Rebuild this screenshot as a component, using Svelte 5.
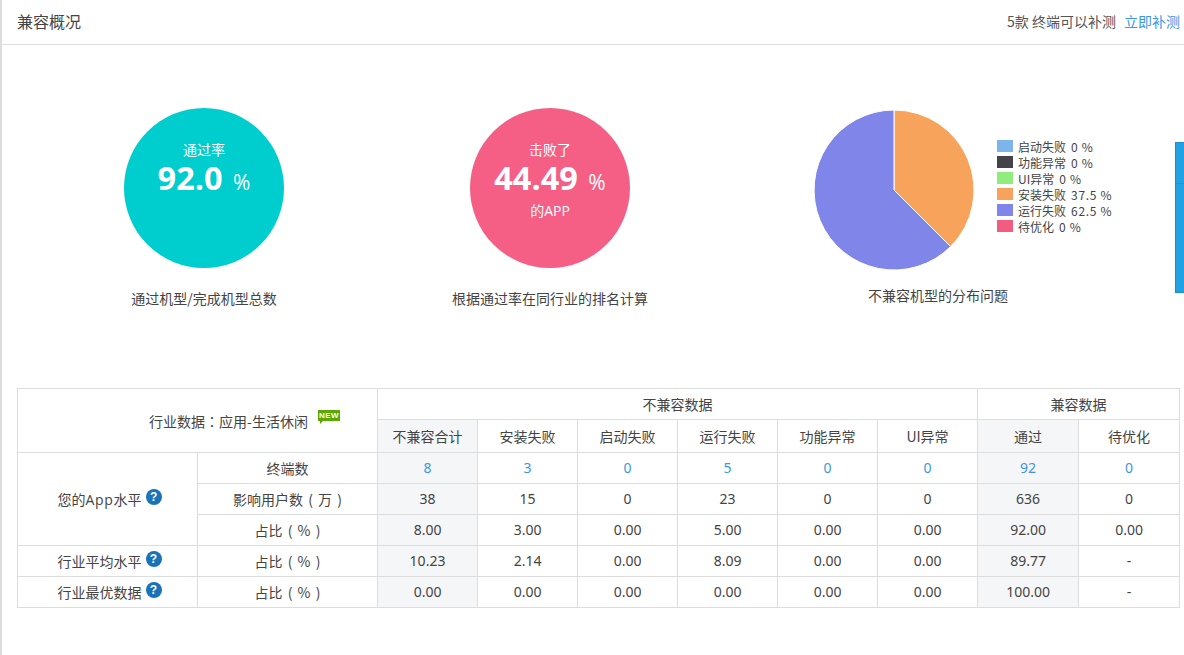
<script lang="ts">
  const legend = [
    { label: "启动失败", value: "0 %", color: "#7cb5ec" },
    { label: "功能异常", value: "0 %", color: "#434348" },
    { label: "UI异常", value: "0 %", color: "#90ed7d" },
    { label: "安装失败", value: "37.5 %", color: "#f7a35c" },
    { label: "运行失败", value: "62.5 %", color: "#8085e9" },
    { label: "待优化", value: "0 %", color: "#f15c80" },
  ];

  const heads = ["不兼容合计", "安装失败", "启动失败", "运行失败", "功能异常", "UI异常"];
  const terminals = ["8", "3", "0", "5", "0", "0", "92", "0"];
  const users = ["38", "15", "0", "23", "0", "0", "636", "0"];
  const share = ["8.00", "3.00", "0.00", "5.00", "0.00", "0.00", "92.00", "0.00"];
  const average = ["10.23", "2.14", "0.00", "8.09", "0.00", "0.00", "89.77", "-"];
  const best = ["0.00", "0.00", "0.00", "0.00", "0.00", "0.00", "100.00", "-"];
</script>

<div class="page">
  <header class="top">
    <h1>兼容概况</h1>
    <div class="top-right">
      <span>5款 终端可以补测</span>
      <a href="#retest">立即补测</a>
    </div>
  </header>

  <section class="stats">
    <div class="stat stat-a">
      <div class="circle teal">
        <span class="small">通过率</span>
        <span class="big">92.0 <em>%</em></span>
      </div>
      <p>通过机型/完成机型总数</p>
    </div>

    <div class="stat stat-b">
      <div class="circle pink">
        <span class="small">击败了</span>
        <span class="big">44.49 <em>%</em></span>
        <span class="small">的<span class="latin">APP</span></span>
      </div>
      <p>根据通过率在同行业的排名计算</p>
    </div>

    <div class="stat stat-c">
      <div class="chart">
        <svg width="164" height="164" viewBox="0 0 164 164" aria-hidden="true">
          <path d="M82 82 L82 2 A80 80 0 0 1 138.6 138.6 Z" fill="#f7a35c" stroke="#fff" stroke-width="1" />
          <path d="M82 82 L138.6 138.6 A80 80 0 1 1 82 2 Z" fill="#8085e9" stroke="#fff" stroke-width="1" />
        </svg>
        <ul class="legend">
          {#each legend as item}
            <li>
              <i class="swatch" style="background: {item.color}"></i>
              <span>{item.label}</span>
              <span class="pct">{item.value}</span>
            </li>
          {/each}
        </ul>
      </div>
      <p>不兼容机型的分布问题</p>
    </div>
  </section>

  <table>
    <colgroup>
      <col class="w180" /><col class="w180" />
      <col class="w100" /><col class="w100" /><col class="w100" />
      <col class="w100" /><col class="w100" /><col class="w100" />
      <col class="w101" /><col class="w101" />
    </colgroup>
    <tbody>
      <tr>
        <td colspan="2" rowspan="2" class="industry">
          行业数据<span class="colon">：</span>应用-生活休闲<span class="new">NEW</span>
        </td>
        <td colspan="6">不兼容数据</td>
        <td colspan="2">兼容数据</td>
      </tr>
      <tr class="row-b">
        {#each heads as head, i}
          <td class:shade={i === 0}>{head}</td>
        {/each}
        <td class="shade">通过</td>
        <td>待优化</td>
      </tr>
      <tr>
        <td rowspan="3" class="level">您的<span class="latin app">App</span>水平<span class="help">?</span></td>
        <td>终端数</td>
        {#each terminals as v, i}
          <td class="num" class:shade={i === 0 || i === 6}><a href="#detail">{v}</a></td>
        {/each}
      </tr>
      <tr>
        <td class="unit">影响用户数 ( 万 )</td>
        {#each users as v, i}
          <td class="num" class:shade={i === 0 || i === 6}>{v}</td>
        {/each}
      </tr>
      <tr>
        <td class="unit">占比 ( % )</td>
        {#each share as v, i}
          <td class="num" class:shade={i === 0 || i === 6}>{v}</td>
        {/each}
      </tr>
      <tr>
        <td class="level">行业平均水平<span class="help">?</span></td>
        <td class="unit">占比 ( % )</td>
        {#each average as v, i}
          <td class="num" class:shade={i === 0 || i === 6}>{v}</td>
        {/each}
      </tr>
      <tr>
        <td class="level">行业最优数据<span class="help">?</span></td>
        <td class="unit">占比 ( % )</td>
        {#each best as v, i}
          <td class="num" class:shade={i === 0 || i === 6}>{v}</td>
        {/each}
      </tr>
    </tbody>
  </table>

  <div class="side-tab"></div>
</div>

<style>
  :global(body) {
    margin: 0;
    background: #fff;
    overflow: hidden;
  }

  .page {
    position: relative;
    box-sizing: border-box;
    height: 655px;
    border-left: 2px solid #ddd;
    font-family: "Noto Sans CJK SC", "Noto Sans", sans-serif;
    font-size: 14px;
    color: #444;
  }

  .top {
    box-sizing: border-box;
    height: 45px;
    display: flex;
    align-items: center;
    justify-content: space-between;
    padding: 0 4px 2px 15px;
    border-bottom: 1px solid #ddd;
  }

  h1 {
    margin: 0;
    font-size: 16px;
    font-weight: 400;
    color: #444;
  }

  .top-right {
    display: flex;
    gap: 8px;
    font-size: 14px;
    color: #555;
  }

  a {
    color: #3b97e3;
    text-decoration: none;
  }

  .latin {
    font-family: "Open Sans", "Noto Sans", sans-serif;
  }

  .app {
    letter-spacing: 0.7px;
  }

  /* stats row */
  .stats {
    display: flex;
    padding: 63px 0 0 29px;
    height: 343px;
    box-sizing: border-box;
  }

  .stat {
    display: flex;
    flex-direction: column;
    align-items: center;
  }

  .stat p {
    margin: 0;
    line-height: 20px;
    color: #444;
  }

  .stat-a,
  .stat-b {
    width: 346px;
  }

  .stat-a p,
  .stat-b p {
    margin-top: 20px;
  }

  .stat-c {
    width: 430px;
  }

  .stat-c p {
    margin-top: 13px;
  }

  .circle {
    box-sizing: border-box;
    width: 160px;
    height: 160px;
    border-radius: 50%;
    display: flex;
    flex-direction: column;
    align-items: center;
    padding-top: 31px;
    color: #fff;
  }

  .teal {
    background: #00cdcd;
  }

  .pink {
    background: #f55f85;
  }

  .small {
    font-size: 14px;
    line-height: 20px;
  }

  .big {
    font-family: "Open Sans", "Noto Sans", sans-serif;
    font-size: 32.5px;
    font-weight: 700;
    line-height: 38px;
    margin-bottom: 3px;
  }

  .big em {
    font-style: normal;
    font-size: 21px;
    font-weight: 400;
    line-height: 1;
    margin-left: 2px;
  }

  .chart {
    display: flex;
    align-items: center;
    align-self: flex-start;
    margin-left: 89px;
    height: 164px;
  }

  .legend {
    list-style: none;
    margin: -8px 0 0 21px;
    padding: 0;
    font-size: 12px;
    color: #444;
  }

  .legend li {
    display: flex;
    align-items: center;
    height: 16px;
    white-space: nowrap;
  }

  .swatch {
    width: 16px;
    height: 12px;
    margin-right: 5px;
  }

  .pct {
    margin-left: 5px;
    letter-spacing: 0.7px;
  }

  /* table */
  table {
    margin-left: 15px;
    width: 1163px;
    table-layout: fixed;
    border-collapse: collapse;
    font-size: 14px;
    color: #444;
  }

  .w180 {
    width: 180px;
  }

  .w100 {
    width: 100px;
  }

  .w101 {
    width: 101px;
  }

  td {
    box-sizing: border-box;
    height: 31px;
    padding: 0;
    border: 1px solid #ddd;
    text-align: center;
    vertical-align: middle;
    line-height: 20px;
  }

  .row-b td {
    height: 33px;
  }

  .shade {
    background: #f5f6f8;
  }

  .num {
    font-family: "Noto Sans", sans-serif;
  }

  .unit {
    word-spacing: 2px;
  }

  .level {
    padding-left: 4px;
  }

  .industry {
    padding-left: 94px;
    white-space: nowrap;
  }

  .colon {
    font-family: "Noto Sans CJK TC", sans-serif;
  }

  .new {
    display: inline-block;
    position: relative;
    top: -9px;
    box-sizing: border-box;
    width: 22px;
    height: 11px;
    margin-left: 10px;
    background: #5ba804;
    color: #fff;
    font-family: "Liberation Sans", sans-serif;
    font-size: 8px;
    font-weight: 700;
    letter-spacing: 0.4px;
    line-height: 11px;
    text-align: center;
  }

  .new::after {
    content: "";
    position: absolute;
    left: 2px;
    top: 11px;
    border-top: 3px solid #5ba804;
    border-right: 3px solid transparent;
  }

  .help {
    display: inline-block;
    position: relative;
    top: -4px;
    width: 16px;
    height: 16px;
    margin-left: 4px;
    border-radius: 50%;
    background: #1a72b8;
    color: #fff;
    font-family: "Liberation Sans", sans-serif;
    font-size: 12px;
    font-weight: 700;
    line-height: 16px;
    text-align: center;
  }

  .side-tab {
    position: absolute;
    right: 0;
    top: 142px;
    width: 9px;
    height: 151px;
    box-sizing: border-box;
    background: linear-gradient(#20a2e5 40px, #1b93d4 40px, #1b93d4 41px, #20a2e5 41px);
    border: 1px solid #1a8fcf;
    border-right: 0;
  }
</style>
